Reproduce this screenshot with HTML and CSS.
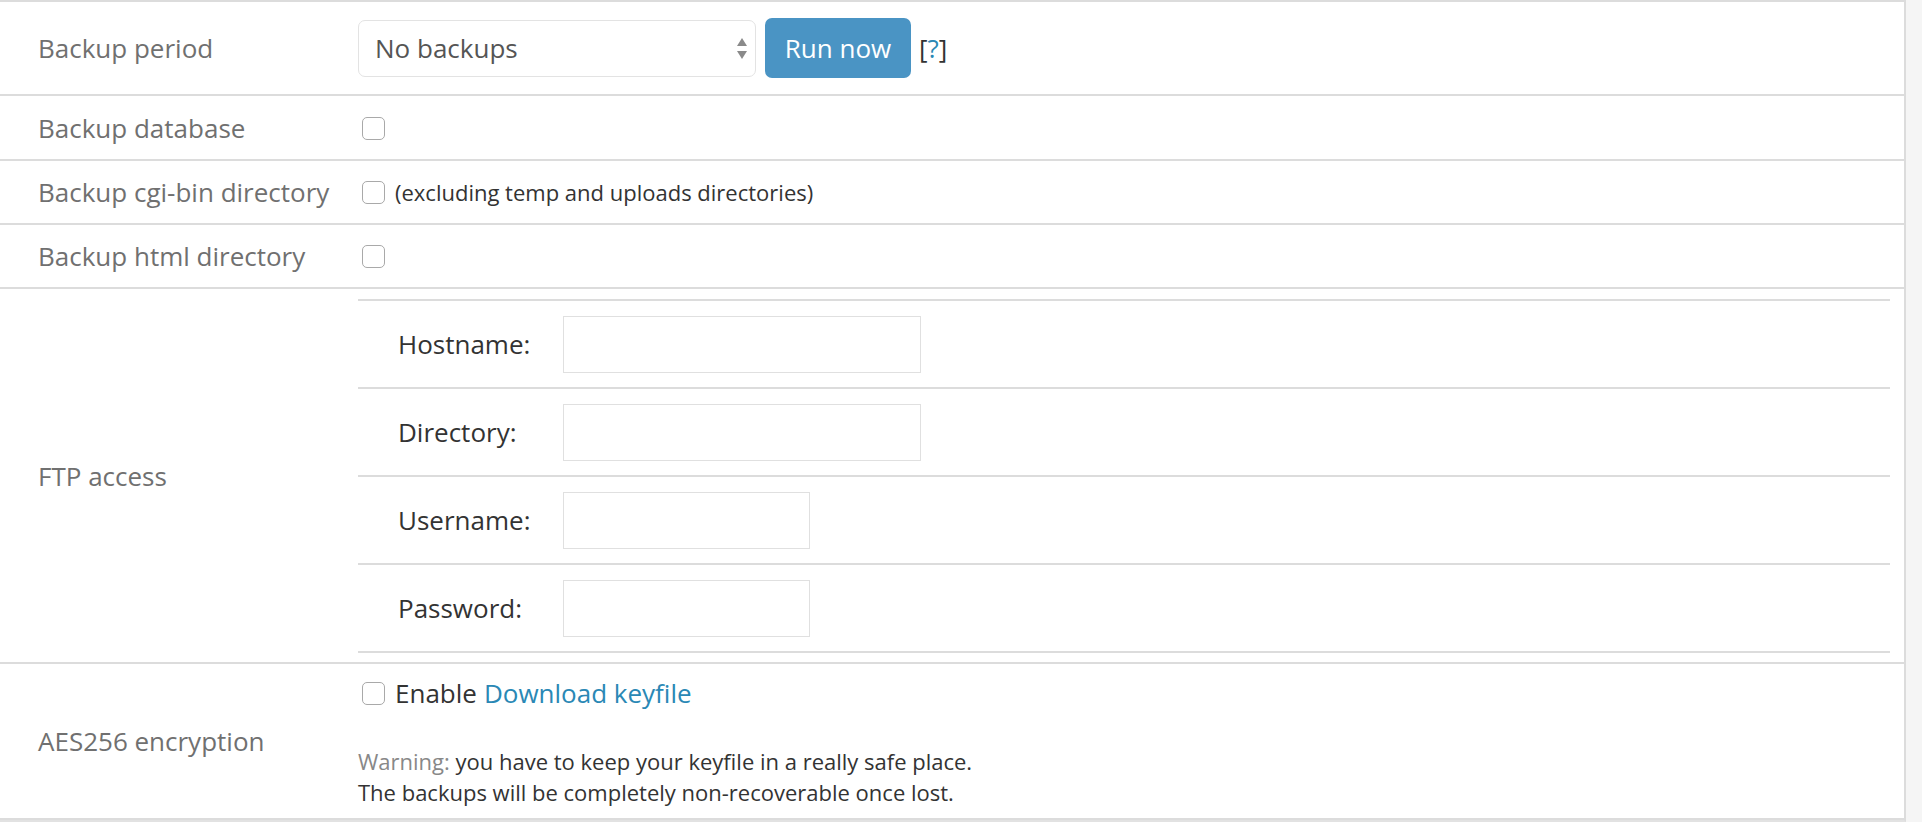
FILE: index.html
```html
<!DOCTYPE html>
<html lang="en">
<head>
<meta charset="utf-8">
<title>Backup settings</title>
<link rel="stylesheet" href="styles.css">
</head>
<body>
<div class="panel">
  <table class="form">
    <tr class="row-period">
      <td class="label">Backup period</td>
      <td class="value">
        <div class="inline">
          <div class="select-wrap">
            <select class="select">
              <option>No backups</option>
            </select>
            <svg class="arrows" width="12" height="24" viewBox="0 0 12 24">
              <path d="M6 1 L11 9 L1 9 Z" fill="#8a8a8a"/>
              <path d="M1 14 L11 14 L6 22 Z" fill="#8a8a8a"/>
            </svg>
          </div>
          <button class="btn">Run now</button>
          <span class="help">[<a href="#" class="link">?</a>]</span>
        </div>
      </td>
    </tr>
    <tr class="row-check row-first">
      <td class="label">Backup database</td>
      <td class="value"><input type="checkbox" class="cb"></td>
    </tr>
    <tr class="row-check">
      <td class="label">Backup cgi-bin directory</td>
      <td class="value"><label class="cb-line"><input type="checkbox" class="cb"><span class="small">(excluding temp and uploads directories)</span></label></td>
    </tr>
    <tr class="row-check">
      <td class="label">Backup html directory</td>
      <td class="value"><input type="checkbox" class="cb"></td>
    </tr>
    <tr class="row-ftp">
      <td class="label">FTP access</td>
      <td class="value ftp-cell">
        <table class="inner">
          <tr>
            <td class="ilabel">Hostname:</td>
            <td class="ivalue"><input type="text" class="text wide"></td>
          </tr>
          <tr>
            <td class="ilabel">Directory:</td>
            <td class="ivalue"><input type="text" class="text wide"></td>
          </tr>
          <tr>
            <td class="ilabel">Username:</td>
            <td class="ivalue"><input type="text" class="text narrow"></td>
          </tr>
          <tr>
            <td class="ilabel">Password:</td>
            <td class="ivalue"><input type="password" class="text narrow"></td>
          </tr>
        </table>
      </td>
    </tr>
    <tr class="row-aes">
      <td class="label">AES256 encryption</td>
      <td class="value aes-cell">
        <label class="cb-line enable"><input type="checkbox" class="cb"><span class="dark">Enable</span><a href="#" class="link dl">Download keyfile</a></label>
        <p class="warning"><span class="warn-word">Warning:</span> you have to keep your keyfile in a really safe place.<br>The backups will be completely non-recoverable once lost.</p>
      </td>
    </tr>
  </table>
</div>
</body>
</html>
```
FILE: styles.css
```css
html, body {
  margin: 0;
  padding: 0;
  background: #f5f5f5;
  font-family: "Open Sans", "Liberation Sans", sans-serif;
}

.panel {
  width: 1904px;
  background: #ffffff;
  border-right: 2px solid #dcdcdc;
  border-bottom: 2px solid #e2e2e2;
}

.form {
  width: 100%;
  border-collapse: collapse;
  border-top: 2px solid #dcdcdc;
}

.form > tbody > tr > td {
  border-bottom: 2px solid #dcdcdc;
  padding: 0;
  vertical-align: middle;
}

.label {
  width: 320px;
  padding-left: 38px !important;
  font-size: 26px;
  color: #707070;
  white-space: nowrap;
}

.row-period > td { height: 92px; }
.row-check > td { height: 62px; }
.row-first > td { height: 63px; }

.inline {
  display: flex;
  align-items: center;
}

.select-wrap {
  position: relative;
  width: 398px;
  height: 57px;
}

.select {
  appearance: none;
  -webkit-appearance: none;
  box-sizing: border-box;
  width: 100%;
  height: 100%;
  border: 1.5px solid #e3e3e3;
  border-radius: 7px;
  background: #ffffff;
  padding: 0 40px 0 16px;
  font-family: "Open Sans", "Liberation Sans", sans-serif;
  font-size: 26px;
  color: #555555;
}

.arrows {
  position: absolute;
  right: 8px;
  top: 17px;
}

.btn {
  margin-left: 9px;
  height: 60px;
  width: 146px;
  border: none;
  border-radius: 7px;
  background: #4a94c4;
  color: #ffffff;
  font-family: "Open Sans", "Liberation Sans", sans-serif;
  font-size: 26px;
  padding: 0;
}

.help {
  margin-left: 8px;
  font-size: 26px;
  color: #333333;
}

.link {
  color: #2a88b5;
  text-decoration: none;
}

.cb {
  appearance: none;
  -webkit-appearance: none;
  box-sizing: border-box;
  width: 23px;
  height: 23px;
  margin: 0 0 0 4px;
  border: 1.5px solid #a9a9a9;
  border-radius: 5px;
  background: #ffffff;
  vertical-align: middle;
  flex: none;
}

.cb-line {
  display: flex;
  align-items: center;
}

.small {
  margin-left: 10px;
  font-size: 22px;
  color: #333333;
}

.ftp-cell {
  padding: 10px 14px 9px 0 !important;
}

.inner {
  width: 100%;
  border-collapse: collapse;
  border-top: 2px solid #dcdcdc;
}

.inner td {
  border-bottom: 2px solid #dcdcdc;
  height: 86px;
  padding: 0;
  vertical-align: middle;
}

.ilabel {
  width: 165px;
  padding-left: 40px !important;
  font-size: 26px;
  color: #333333;
  white-space: nowrap;
}

.text {
  box-sizing: border-box;
  height: 57px;
  border: 1.5px solid #e0e0e0;
  border-radius: 0;
  background: #ffffff;
  font-size: 22px;
  margin: 0;
  display: block;
}

.wide { width: 358px; }
.narrow { width: 247px; }

.aes-cell {
  padding: 11px 0 10px 0 !important;
  vertical-align: top !important;
}

.enable {
  height: 36px;
  font-size: 26px;
}

.dark {
  margin-left: 10px;
  color: #333333;
}

.dl {
  margin-left: 7px;
}

.warning {
  margin: 35px 0 0 0;
  font-size: 22px;
  line-height: 31px;
  color: #333333;
}

.warn-word {
  color: #888888;
}
```
